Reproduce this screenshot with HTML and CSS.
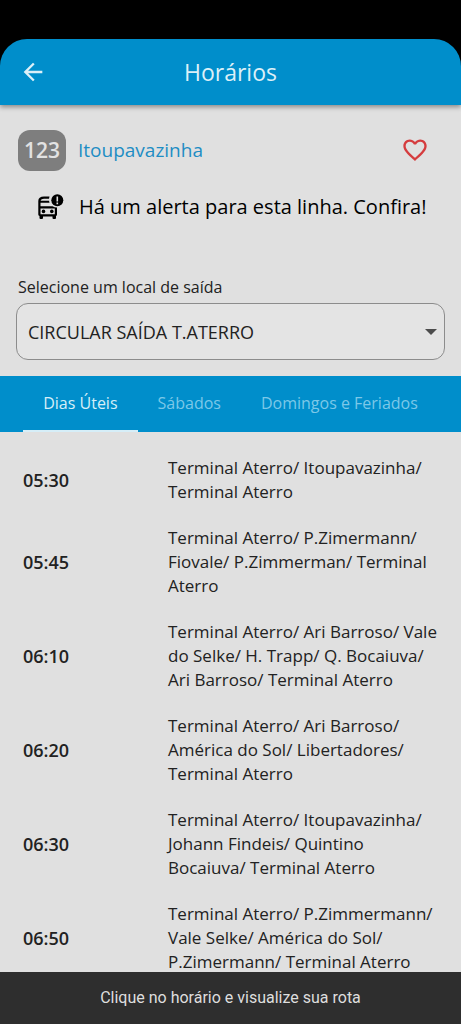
FILE: index.html
```html
<!DOCTYPE html>
<html lang="pt-BR">
<head>
<meta charset="utf-8">
<meta name="viewport" content="width=device-width, initial-scale=1">
<title>Horários</title>
<link rel="stylesheet" href="styles.css">
</head>
<body>
<div class="app">
  <header class="app-bar">
    <button class="icon-button" type="button" aria-label="Voltar">
      <svg class="icon-back" viewBox="0 0 24 24" aria-hidden="true"><path d="M20 11H7.83l5.59-5.59L12 4l-8 8 8 8 1.41-1.41L7.83 13H20z"/></svg>
    </button>
    <h1 class="title">Horários</h1>
  </header>

  <section class="line-info">
    <div class="line-row">
      <span class="line-number">123</span>
      <h2 class="line-name">Itoupavazinha</h2>
      <button class="icon-button" type="button" aria-label="Favoritar">
        <svg class="icon-heart" viewBox="0 0 24 24" aria-hidden="true"><path d="M16.5 3c-1.74 0-3.41.81-4.5 2.09C10.91 3.81 9.24 3 7.5 3 4.42 3 2 5.42 2 8.5c0 3.78 3.4 6.86 8.55 11.54L12 21.35l1.45-1.32C18.6 15.36 22 12.28 22 8.5 22 5.42 19.58 3 16.5 3zm-4.4 15.55l-.1.1-.1-.1C7.14 14.24 4 11.39 4 8.5 4 6.5 5.5 5 7.5 5c1.54 0 3.04.99 3.57 2.36h1.87C13.46 5.99 14.96 5 16.5 5c2 0 3.5 1.5 3.5 3.5 0 2.89-3.14 5.74-7.9 10.05z"/></svg>
      </button>
    </div>
    <div class="alert-row">
      <svg class="icon-bus" viewBox="0 0 28 28" aria-hidden="true">
        <path fill-rule="evenodd" d="M13.500 3.500H8Q2.300 3.500 2.300 8V21.500Q2.300 22.500 3.500 23V25Q3.500 26 4.500 26H6Q7 26 7 25V23.500H16.500V25Q16.500 26 17.500 26H19Q20 26 20 25V23Q21 22.500 21 21.500V14.500Q18.500 14.500 16.500 13.300H4.500V9.700H13.500L13 7.700H4.500Q5 5.700 8 5.700H13ZM4.500 15.500H18.800V21.300H4.500Z"/>
        <circle cx="7.500" cy="18.400" r="1.800"/>
        <circle cx="15.800" cy="18.400" r="1.800"/>
        <circle cx="21.300" cy="7.300" r="6"/>
        <path class="bus-mark" d="M20.500 3.500h1.600v5h-1.600zM20.500 9.600h1.600v1.600h-1.600z"/>
      </svg>
      <p class="alert-text">Há um alerta para esta linha. Confira!</p>
    </div>
  </section>

  <section class="departure">
    <label class="departure-label" for="departure">Selecione um local de saída</label>
    <div class="select-box">
      <select class="departure-select" id="departure">
        <option>CIRCULAR SAÍDA T.ATERRO</option>
      </select>
      <svg class="icon-caret" viewBox="0 0 12 6" aria-hidden="true"><path d="M0 0h12L6 6z"/></svg>
    </div>
  </section>

  <nav class="tabs" role="tablist">
    <button class="tab tab-active" type="button" role="tab" aria-selected="true">Dias Úteis</button>
    <button class="tab" type="button" role="tab" aria-selected="false">Sábados</button>
    <button class="tab" type="button" role="tab" aria-selected="false">Domingos e Feriados</button>
  </nav>

  <main class="schedule">
    <ul class="trips">
      <li class="trip"><time class="trip-time">05:30</time><span>Terminal Aterro/ Itoupavazinha/ Terminal Aterro</span></li>
      <li class="trip"><time class="trip-time">05:45</time><span>Terminal Aterro/ P.Zimermann/ Fiovale/ P.Zimmerman/ Terminal Aterro</span></li>
      <li class="trip"><time class="trip-time">06:10</time><span>Terminal Aterro/ Ari Barroso/ Vale do Selke/ H. Trapp/ Q. Bocaiuva/ Ari Barroso/ Terminal Aterro</span></li>
      <li class="trip"><time class="trip-time">06:20</time><span>Terminal Aterro/ Ari Barroso/ América do Sol/ Libertadores/ Terminal Aterro</span></li>
      <li class="trip"><time class="trip-time">06:30</time><span>Terminal Aterro/ Itoupavazinha/ Johann Findeis/ Quintino Bocaiuva/ Terminal Aterro</span></li>
      <li class="trip"><time class="trip-time">06:50</time><span>Terminal Aterro/ P.Zimmermann/ Vale Selke/ América do Sol/ P.Zimermann/ Terminal Aterro</span></li>
    </ul>
  </main>

  <footer class="snackbar" role="status">Clique no horário e visualize sua rota</footer>
</div>
</body>
</html>
```
FILE: styles.css
```css
* {
  box-sizing: border-box;
}

body {
  margin: 0;
  background: #000;
  color: #222;
  font-family: "Open Sans", "Noto Sans", sans-serif;
}

button,
select {
  font: inherit;
}

h1,
h2,
p,
ul {
  margin: 0;
  padding: 0;
  font-weight: 400;
}

svg {
  display: block;
  fill: currentColor;
}

.app {
  display: flex;
  flex-direction: column;
  height: 100vh;
  margin: 0 auto;
  padding-top: 39px;
  background: linear-gradient(#000 80px, #e0e0e0 80px);
}

.app-bar {
  display: grid;
  grid-template-columns: 48px 1fr 48px;
  align-items: center;
  flex: none;
  height: 66px;
  padding: 0 9px;
  border-radius: 27px 27px 0 0;
  background: #008ecb;
  color: #dcf0f8;
  box-shadow: 0 2px 5px rgba(0, 0, 0, 0.4);
}

.icon-button {
  display: grid;
  place-items: center;
  width: 48px;
  height: 48px;
  padding: 0;
  border: 0;
  background: none;
  color: inherit;
}

.icon-back {
  width: 28px;
  height: 28px;
}

.title {
  font-size: 23px;
  line-height: 32px;
  text-align: center;
}

.line-info {
  flex: none;
  padding: 21px 22px 0 18px;
}

.line-row {
  display: flex;
  align-items: center;
  gap: 12px;
}

.line-number {
  width: 48px;
  border-radius: 12px;
  background: #7e7e7e;
  color: #e2e2e2;
  font-size: 21px;
  font-weight: 600;
  line-height: 41px;
  text-align: center;
}

.line-name {
  flex: 1;
  color: #1e8dc4;
  font-size: 19px;
  line-height: 24px;
}

.line-row .icon-button {
  color: #d53c3e;
}

.icon-heart {
  width: 28px;
  height: 28px;
}

.alert-row {
  display: flex;
  align-items: center;
  gap: 15px;
  padding: 17px 0 0 18px;
  color: #000;
}

.icon-bus {
  flex: none;
  width: 28px;
  height: 28px;
}

.bus-mark {
  fill: #e0e0e0;
}

.alert-text {
  font-size: 20px;
  line-height: 32px;
  white-space: nowrap;
}

.departure {
  display: flex;
  flex-direction: column;
  gap: 4px;
  flex: none;
  padding: 52px 16px 16px;
}

.departure-label {
  padding-left: 2px;
  font-size: 16px;
  line-height: 24px;
}

.select-box {
  display: grid;
  align-items: center;
}

.select-box > * {
  grid-area: 1 / 1;
}

.departure-select {
  width: 100%;
  height: 57px;
  padding: 0 32px 0 11px;
  border: 1px solid #8c8c8c;
  border-radius: 12px;
  background: #e4e4e4;
  color: #222;
  font-size: 18px;
  appearance: none;
}

.icon-caret {
  justify-self: end;
  width: 12px;
  height: 6px;
  margin-right: 8px;
  color: #4c4c4c;
  pointer-events: none;
}

.tabs {
  display: flex;
  justify-content: center;
  flex: none;
  height: 56px;
  background: #008ecb;
}

.tab {
  padding: 0 20px;
  border: 0;
  border-bottom: 2px solid transparent;
  background: none;
  color: #7cc8e8;
  font-size: 16px;
  white-space: nowrap;
}

.tab-active {
  border-bottom-color: #d6eef8;
  color: #d6eef8;
}

.schedule {
  flex: 1;
  min-height: 0;
  overflow: hidden;
  padding: 24px 16px 0 23px;
}

.trips {
  display: flex;
  flex-direction: column;
  gap: 22px;
  list-style: none;
}

.trip {
  display: grid;
  grid-template-columns: 1fr 277px;
  align-items: center;
  font-size: 17px;
  line-height: 24px;
}

.trip-time {
  font-size: 18px;
  font-weight: 600;
}

.snackbar {
  flex: none;
  padding: 14px 16px;
  background: #2e2e2e;
  color: #dedede;
  font-family: Roboto, sans-serif;
  font-size: 16px;
  line-height: 24px;
  text-align: center;
}
```
